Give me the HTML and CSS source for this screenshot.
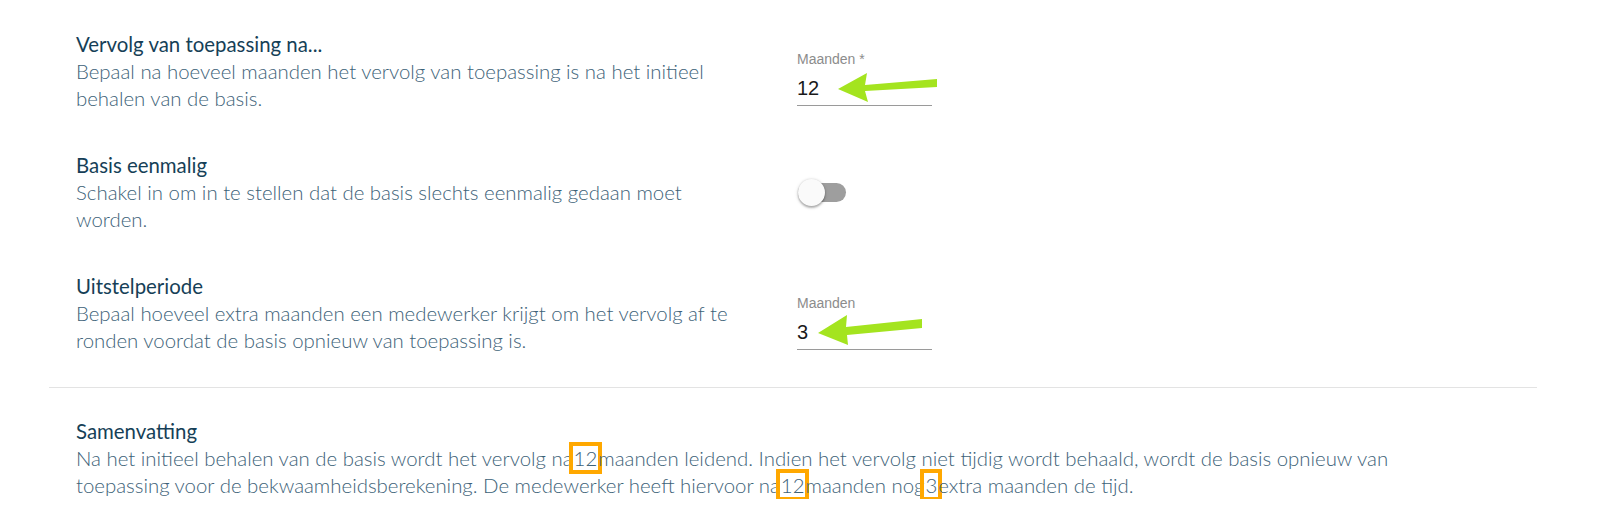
FILE: index.html
```html
<!DOCTYPE html>
<html lang="nl">
<head>
  <meta charset="UTF-8" />
  <title>Instellingen basis</title>
  <link rel="stylesheet" href="styles.css">
</head>
<body>
  <div class="panel">
    <div class="settings">
      <div class="row">
        <div class="row-text">
          <h3>Vervolg van toepassing na...</h3>
          <p>Bepaal na hoeveel maanden het vervolg van toepassing is na het initieel behalen van de basis.</p>
        </div>
        <div class="row-control">
          <div class="field">
            <label>Maanden *</label>
            <div class="field-value">12</div>
            <svg class="arrow" width="150" height="60" viewBox="0 0 150 60">
              <polygon points="41,38 70,22 68,34 140,28 140,36 68,40 71,51" />
            </svg>
          </div>
        </div>
      </div>

      <div class="row">
        <div class="row-text">
          <h3>Basis eenmalig</h3>
          <p>Schakel in om in te stellen dat de basis slechts eenmalig gedaan moet worden.</p>
        </div>
        <div class="row-control">
          <div class="toggle">
            <span class="track"></span>
            <span class="thumb"></span>
          </div>
        </div>
      </div>

      <div class="row">
        <div class="row-text">
          <h3>Uitstelperiode</h3>
          <p>Bepaal hoeveel extra maanden een medewerker krijgt om het vervolg af te ronden voordat de basis opnieuw van toepassing is.</p>
        </div>
        <div class="row-control">
          <div class="field field-late">
            <label>Maanden</label>
            <div class="field-value">3</div>
            <svg class="arrow" width="150" height="60" viewBox="0 0 150 60">
              <polygon points="21,38 50,20 49,32 125,24 125,33 50,40 51,50" />
            </svg>
          </div>
        </div>
      </div>
    </div>

    <hr class="divider">

    <div class="summary">
      <h3>Samenvatting</h3>
      <p>Na het initieel behalen van de basis wordt het vervolg na<span class="mark">12</span>maanden leidend. Indien het vervolg niet tijdig wordt behaald, wordt de basis opnieuw van toepassing voor de bekwaamheidsberekening. De medewerker heeft hiervoor na<span class="mark">12</span>maanden nog<span class="mark">3</span>extra maanden de tijd.</p>
    </div>
  </div>
</body>
</html>
```

FILE: styles.css
```css
body {
  margin: 0;
  background: #fff;
  font-family: Lato, "Open Sans", sans-serif;
}
.panel {
  width: 1488px;
  margin-left: 49px;
}
.settings {
  padding: 31px 27px 0;
}
.row {
  display: flex;
  align-items: center;
  margin-bottom: 40px;
}
.row:last-child {
  margin-bottom: 33px;
}
.row-text {
  width: 721px;
}
.row-text p {
  max-width: 670px;
}
h3 {
  margin: 0;
  font-size: 20.4px;
  font-weight: 400;
  line-height: 27px;
  color: #163f57;
}
p {
  margin: 0;
  font-size: 20.4px;
  font-weight: 300;
  line-height: 27px;
  color: #3d6278;
}
.row-control {
  flex: 1;
}
.field {
  position: relative;
  width: 135px;
  margin-top: 14px;
  font-family: "Liberation Sans", Arial, sans-serif;
}
.field-late {
  margin-top: 18px;
}
.field label {
  display: block;
  font-size: 14px;
  line-height: 16px;
  color: #8c8c8c;
}
.field-value {
  font-size: 20px;
  line-height: 24px;
  margin-top: 9px;
  padding-bottom: 5px;
  color: #1a1a1a;
  border-bottom: 1px solid #9a9a9a;
}
.arrow {
  position: absolute;
  left: 0;
  top: 0;
}
.arrow polygon {
  fill: #a4e41f;
}
.toggle {
  position: relative;
  width: 48px;
  height: 27px;
  margin-left: 1px;
}
.track {
  position: absolute;
  left: 0;
  top: 4px;
  width: 48px;
  height: 19px;
  border-radius: 10px;
  background: #9e9e9e;
}
.thumb {
  position: absolute;
  left: 0;
  top: 0;
  width: 27px;
  height: 27px;
  border-radius: 50%;
  background: #fafafa;
  box-shadow: 0 2px 2px rgba(0,0,0,0.24), 0 0 2px rgba(0,0,0,0.14), 0 1px 4px rgba(0,0,0,0.12);
}
.divider {
  margin: 0;
  border: none;
  border-top: 1px solid #e3e3e3;
}
.summary {
  padding: 30px 27px 0;
}
.summary p {
  max-width: 1350px;
}
.mark {
  display: inline-block;
  line-height: 24px;
  padding: 4px 5px;
  margin: -4px -4px;
  outline: 4px solid #ffa800;
  outline-offset: -4px;
  color: #3d6278;
}
```
